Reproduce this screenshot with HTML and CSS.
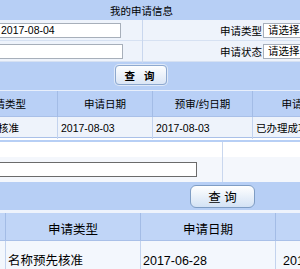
FILE: index.html
```html
<!DOCTYPE html>
<html lang="zh-CN">
<head>
<meta charset="utf-8">
<title>我的申请信息</title>
<link rel="stylesheet" href="styles.css">
</head>
<body>
<div class="page">
  <section class="top">
    <div class="title">我的申请信息</div>
    <div class="frow">
      <div class="cell c-input"><span class="inp">2017-08-04</span></div>
      <div class="cell c-label">申请类型</div>
      <div class="cell c-select"><span class="sel">请选择</span></div>
    </div>
    <div class="frow">
      <div class="cell c-input"><span class="inp inp2"></span></div>
      <div class="cell c-label">申请状态</div>
      <div class="cell c-select"><span class="sel">请选择</span></div>
    </div>
    <div class="btnrow"><button class="btn">查 询</button></div>
    <div class="t4 thead">
      <div class="tc">申请类型</div>
      <div class="tc">申请日期</div>
      <div class="tc">预审/约日期</div>
      <div class="tc">申请状态</div>
    </div>
    <div class="t4 tdata">
      <div class="tc">名称预先核准</div>
      <div class="tc">2017-08-03</div>
      <div class="tc">2017-08-03</div>
      <div class="tc">已办理成功</div>
    </div>
    <div class="gap"></div>
  </section>

  <section class="bottom">
    <div class="brow brow1">
      <div class="bcell"></div>
      <div class="bcell"></div>
    </div>
    <div class="brow brow2">
      <div class="bcell"><span class="binp"></span></div>
      <div class="bcell"></div>
    </div>
    <div class="bbtnrow"><button class="bbtn">查 询</button></div>
    <div class="strip"></div>
    <div class="t3 bhead">
      <div class="bc"></div>
      <div class="bc">申请类型</div>
      <div class="bc">申请日期</div>
      <div class="bc">预审日期</div>
    </div>
    <div class="t3 bdata">
      <div class="bc"></div>
      <div class="bc">名称预先核准</div>
      <div class="bc">2017-06-28</div>
      <div class="bc bc-last">2017-06-28</div>
    </div>
  </section>
</div>
</body>
</html>
```

FILE: styles.css
```css
html, body {
  margin: 0;
  padding: 0;
  overflow: hidden;
}
body {
  width: 300px;
  height: 269px;
  background: #fff;
  color: #000;
  font-family: "Liberation Sans", "Noto Sans CJK SC", sans-serif;
}
.page {
  width: 300px;
  overflow: hidden;
}

/* ---------- top (small) part ---------- */
.top {
  font-size: 10.5px;
}
.title {
  height: 20px;
  line-height: 22px;
  padding-left: 110px;
  background: #b7cff5;
  white-space: nowrap;
}
.frow {
  display: grid;
  grid-template-columns: 143px 120px 60px;
  width: 323px;
  height: 20px;
  background: #eef3fb;
  border-bottom: 1px solid #d6e1f2;
}
.cell {
  white-space: nowrap;
}
.c-input {
  border-right: 1px solid #c9d7ee;
  padding-top: 3px;
}
.inp {
  display: block;
  box-sizing: border-box;
  height: 15px;
  width: 161px;
  margin-left: -40px;
  padding-left: 40px;
  line-height: 13px;
  background: #fff;
  border: 1px solid #a7afba;
}
.inp2 {
  width: 163px;
}
.c-label {
  text-align: right;
  line-height: 22px;
  padding-right: 1px;
}
.c-select {
  padding-top: 3px;
}
.sel {
  display: block;
  box-sizing: border-box;
  width: 60px;
  height: 15px;
  line-height: 13px;
  padding-left: 4px;
  background: #fff;
  border: 1px solid #a7afba;
}
.btnrow {
  height: 25px;
  padding: 3px 0 0 115px;
  background: #b7cff5;
}
.btn {
  display: block;
  width: 52px;
  height: 20px;
  padding: 0;
  border: 1px solid #8ea9cf;
  border-radius: 4px;
  background: linear-gradient(#fdfeff, #dbe6f6);
  box-shadow: 0 0 0 1px #dfe9f8;
  font-family: inherit;
  font-size: 10.5px;
  font-weight: bold;
  letter-spacing: 3px;
  color: #000;
}
.t4 {
  display: grid;
  grid-template-columns: 105px 95px 100px 100px;
  width: 400px;
  margin-left: -47px;
  white-space: nowrap;
}
.thead {
  height: 25px;
  border-top: 1px solid #e8effb;
  background: #b9d0f6;
  line-height: 26px;
  text-align: center;
}
.thead .tc {
  border-right: 1px solid #a3bce6;
}
.tdata {
  height: 20px;
  line-height: 22px;
  background: #eef3fb;
  border-top: 1px solid #a9c0e8;
  border-bottom: 1px solid #a9c0e8;
}
.tdata .tc {
  padding-left: 3px;
  border-right: 1px solid #c3d3ee;
}
.gap {
  height: 2px;
  border-bottom: 2px solid #b7cff5;
}

/* ---------- bottom (large) part ---------- */
.bottom {
  font-size: 12.5px;
}
.brow {
  display: grid;
  grid-template-columns: 223px 1fr;
}
.brow1 {
  height: 15px;
  background: #fff;
}
.brow2 {
  height: 25px;
  background: #f4f7fc;
}
.bcell:first-child {
  border-right: 1px solid #c9d7ee;
}
.brow2 .bcell:first-child {
  padding-top: 5px;
}
.binp {
  display: block;
  box-sizing: border-box;
  width: 217px;
  height: 15px;
  margin-left: -20px;
  background: #fff;
  border: 1px solid #6b6b6b;
}
.bbtnrow {
  height: 25px;
  padding: 3px 0 0 190px;
  background: #b7cff5;
}
.bbtn {
  display: block;
  width: 65px;
  height: 23px;
  padding: 0;
  border: 1px solid #7f9dc4;
  border-radius: 6px;
  background: linear-gradient(#ffffff, #d3e2f4);
  font-family: inherit;
  font-size: 12.5px;
  color: #000;
}
.strip {
  height: 3px;
  background: #eef3fc;
}
.t3 {
  display: grid;
  grid-template-columns: 6px 135px 135px 135px;
  width: 411px;
  white-space: nowrap;
}
.bhead {
  height: 27px;
  background: #c0d5f7;
  text-align: center;
}
.bhead .bc {
  line-height: 18px;
  padding-top: 8px;
  border-right: 1px solid #a3bce6;
}
.bdata {
  height: 29px;
  background: #f3f7fd;
  border-top: 1px solid #a9c0e8;
}
.bdata .bc {
  padding: 12px 0 0 2px;
  line-height: 16px;
  border-right: 1px solid #c3d3ee;
}
.bdata .bc:first-child {
  padding-left: 0;
}
.bdata .bc-last {
  padding-left: 7px;
}
```
